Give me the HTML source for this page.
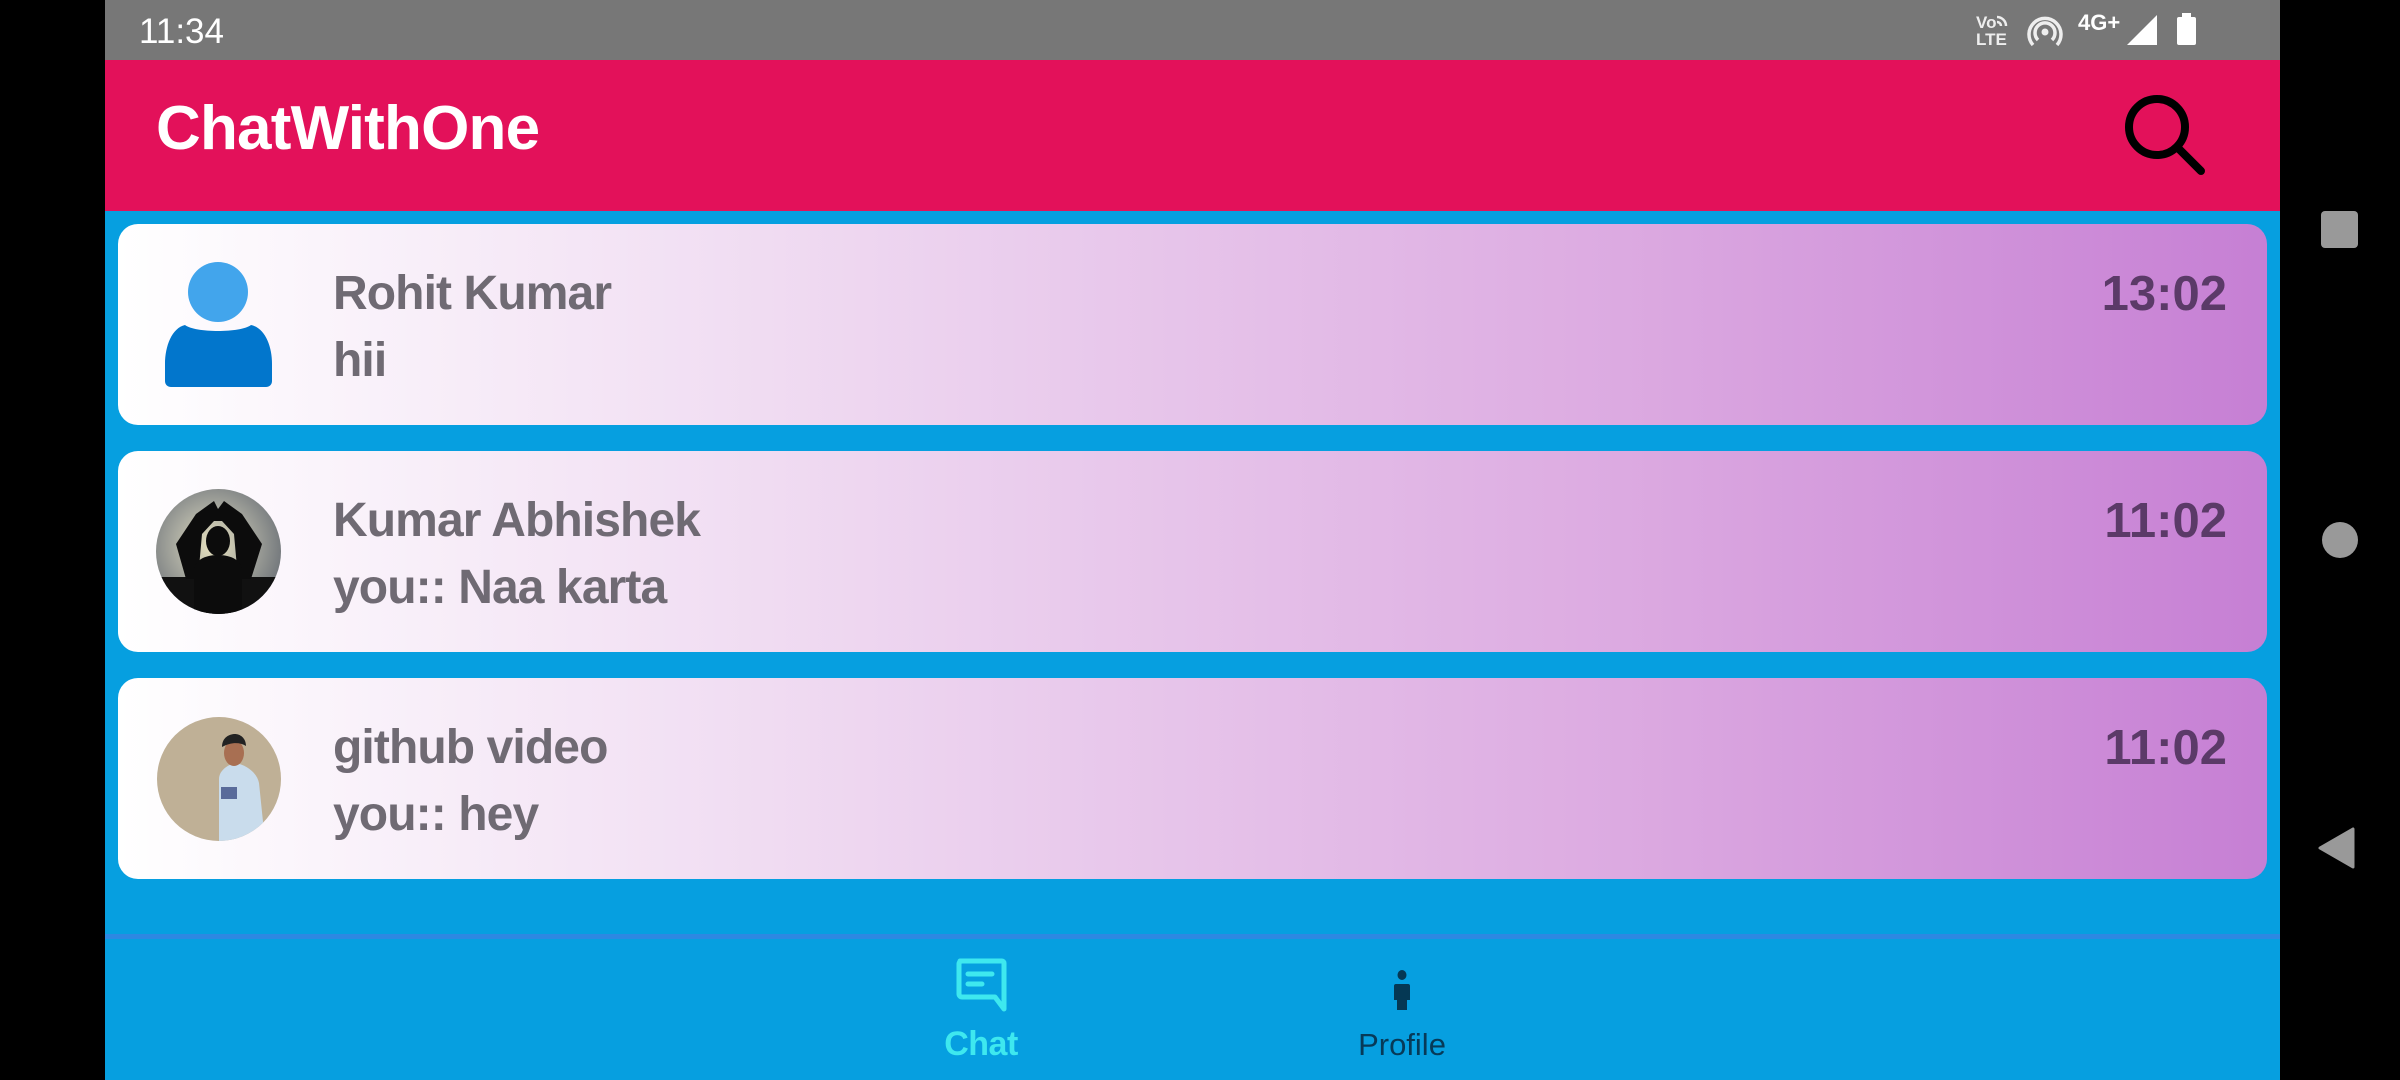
<!DOCTYPE html>
<html><head><meta charset="utf-8"><style>
*{margin:0;padding:0;box-sizing:border-box}
body{width:2400px;height:1080px;overflow:hidden;background:#000;font-family:"Liberation Sans",sans-serif;position:relative}
.abs{position:absolute}
#status{left:105px;top:0;width:2175px;height:60px;background:#777}
#appbar{left:105px;top:60px;width:2175px;height:151px;background:#e3115a}
#body{left:105px;top:211px;width:2175px;height:869px;background:#069fe0}
.card{position:absolute;left:118px;width:2149px;height:201px;border-radius:20px;background:linear-gradient(90deg,#ffffff 0%,#f0dcf2 30%,#dcaae1 70%,#c67fd4 100%)}
.name,.sub,.time{position:absolute;font-weight:bold;font-size:48px;letter-spacing:-0.9px;color:#6f6a73;line-height:1}
.name{left:215px;top:46px}
.sub{left:215px;top:113px}
.time{right:40px;top:46px;color:#5b3a68;font-size:49px;letter-spacing:0}
</style></head><body>
<div id="status" class="abs"></div>
<div class="abs" style="left:139px;top:12px;color:#fff;font-size:35px;line-height:40px">11:34</div>
<svg class="abs" style="left:1970px;top:8px" width="235" height="45" viewBox="1970 8 235 45">
<text x="1976" y="28" fill="#eee" font-family="Liberation Sans" font-weight="bold" font-size="17">Vo</text>
<text x="1976" y="45" fill="#eee" font-family="Liberation Sans" font-weight="bold" font-size="17">LTE</text>
<path d="M1997 17a9 9 0 0 1 9 9M1997 22a4 4 0 0 1 4 4" stroke="#eee" stroke-width="2.5" fill="none"/>
<circle cx="2045" cy="32" r="3.5" fill="#eee"/>
<path d="M2038 40a10 10 0 1 1 14 0M2033 45a16 16 0 1 1 24 0" stroke="#eee" stroke-width="3.5" fill="none"/>
<text x="2078" y="30" fill="#fff" font-family="Liberation Sans" font-weight="bold" font-size="22">4G+</text>
<path d="M2127 45L2157 15V45Z" fill="#fff"/>
<rect x="2177" y="17" width="19" height="28" rx="2" fill="#fff"/><rect x="2182" y="13" width="9" height="5" fill="#fff"/>
</svg>
<div id="appbar" class="abs"></div>
<div class="abs" style="left:156px;top:98px;color:#fff;font-size:62px;font-weight:bold;line-height:62px;letter-spacing:-0.8px">ChatWithOne</div>
<svg class="abs" style="left:2110px;top:85px" width="110" height="100" viewBox="2110 85 110 100">
<circle cx="2157" cy="127" r="28" stroke="#000" stroke-width="8" fill="none"/>
<path d="M2178 148L2201 171" stroke="#000" stroke-width="8" stroke-linecap="round"/>
</svg>
<div id="body" class="abs"></div>

<div class="card" style="top:224px">
<svg class="abs" style="left:0;top:0" width="200" height="200" viewBox="0 0 200 200">
<ellipse cx="100" cy="68" rx="30" ry="30" fill="#42a5ec"/>
<path d="M47 140c0-18 7-36 20-39 10 8 56 8 66 0 14 3 21 21 21 39v17c0 4-3 6-6 6H53c-3 0-6-2-6-6Z" fill="#0276cc"/>
</svg>
<div class="name">Rohit Kumar</div><div class="sub">hii</div><div class="time">13:02</div>
</div>

<div class="card" style="top:451px">
<svg class="abs" style="left:38px;top:38px" width="125" height="125" viewBox="0 0 125 125">
<defs><clipPath id="c1"><circle cx="62.5" cy="62.5" r="62.5"/></clipPath>
<radialGradient id="g1" cx="0.45" cy="0.45" r="0.6"><stop offset="0" stop-color="#e8e2c0"/><stop offset="0.5" stop-color="#a9aaa0"/><stop offset="1" stop-color="#6d7278"/></radialGradient></defs>
<g clip-path="url(#c1)">
<rect width="125" height="125" fill="url(#g1)"/>
<rect y="88" width="125" height="40" fill="#111"/>
<path d="M30 90L20 55 40 25 58 12 62 20 68 12 86 25 106 55 95 90H82L78 45 66 32 58 32 46 45 42 90Z" fill="#0c0c0c"/>
<ellipse cx="62" cy="52" rx="12" ry="15" fill="#0c0c0c"/>
<path d="M38 125V82c0-10 10-16 24-16s24 6 24 16v43Z" fill="#0c0c0c"/>
</g></svg>
<div class="name">Kumar Abhishek</div><div class="sub">you:: Naa karta</div><div class="time">11:02</div>
</div>

<div class="card" style="top:678px">
<svg class="abs" style="left:39px;top:39px" width="124" height="124" viewBox="0 0 124 124">
<defs><clipPath id="c2"><circle cx="62" cy="62" r="62"/></clipPath></defs>
<g clip-path="url(#c2)">
<rect width="124" height="124" fill="#bfb096"/>
<path d="M62 124V62c0-8 8-14 16-16 12 2 22 10 24 20l6 58Z" fill="#c9dcec"/>
<ellipse cx="77" cy="36" rx="10" ry="13" fill="#a86f52"/>
<path d="M65 30c0-10 8-13 13-13s11 4 11 12c-6-4-15-4-24 1Z" fill="#222"/>
<rect x="64" y="70" width="16" height="12" fill="#2a3b78" opacity="0.7"/>
</g></svg>
<div class="name">github video</div><div class="sub">you:: hey</div><div class="time">11:02</div>
</div>

<div class="abs" style="left:105px;top:934px;width:2175px;height:5px;background:#2d88e2"></div>
<svg class="abs" style="left:950px;top:955px" width="60" height="60" viewBox="950 955 60 60">
<path d="M960 961h42a2 2 0 0 1 2 2v46l-9-12h-33a3 3 0 0 1-3-3v-30a3 3 0 0 1 3-3Z" stroke="#3ee8ef" stroke-width="5" fill="none" stroke-linejoin="round"/>
<path d="M968 974h24M968 984h14" stroke="#3ee8ef" stroke-width="5" stroke-linecap="round"/>
</svg>
<div class="abs" style="left:944px;top:1024px;width:74px;text-align:center;color:#3ee8ef;font-weight:bold;font-size:34px;line-height:40px;letter-spacing:-0.5px">Chat</div>
<svg class="abs" style="left:1390px;top:965px" width="25" height="50" viewBox="1390 965 25 50">
<ellipse cx="1402" cy="975" rx="4.5" ry="5" fill="#053854"/>
<path d="M1396 984h12a2 2 0 0 1 2 2v14h-3v10h-10v-10h-3v-14a2 2 0 0 1 2-2Z" fill="#053854"/>
</svg>
<div class="abs" style="left:1355px;top:1025px;width:94px;text-align:center;color:#073a58;font-size:31px;line-height:40px">Profile</div>

<div class="abs" style="left:2321px;top:211px;width:37px;height:37px;border-radius:4px;background:#999"></div>
<div class="abs" style="left:2322px;top:522px;width:36px;height:36px;border-radius:50%;background:#999"></div>
<svg class="abs" style="left:2315px;top:825px" width="45" height="48" viewBox="2315 825 45 48">
<path d="M2353 829L2353 867 2320 848Z" fill="#999" stroke="#999" stroke-width="3" stroke-linejoin="round"/>
</svg>
</body></html>
